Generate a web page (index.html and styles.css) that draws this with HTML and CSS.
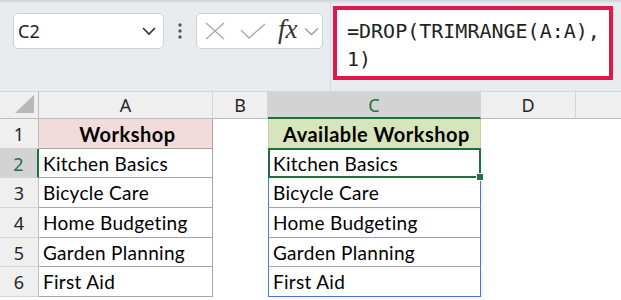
FILE: index.html
```html
<!DOCTYPE html>
<html lang="en">
<head>
    <meta charset="UTF-8">
    <meta name="viewport" content="width=device-width, initial-scale=1.0">
    <title>TRIMRANGE spill</title>
    <link rel="stylesheet" href="styles.css">
</head>
<body>
    <div class="top-strip"></div>

    <!-- Formula bar -->
    <div class="formula-bar">
        <div class="name-box">
            <span>C2</span>
            <svg width="16" height="10" viewBox="0 0 16 10"><path d="M2 2 L8 8 L14 2" fill="none" stroke="#333" stroke-width="1.6"/></svg>
        </div>
        <div class="dots">
            <svg width="6" height="20" viewBox="0 0 6 20"><circle cx="3" cy="3" r="1.7" fill="#555"/><circle cx="3" cy="9" r="1.7" fill="#555"/><circle cx="3" cy="15" r="1.7" fill="#555"/></svg>
        </div>
        <div class="fx-box">
            <svg class="icon-x" width="20" height="18" viewBox="0 0 20 18"><path d="M1 1 L19 17 M19 1 L1 17" fill="none" stroke="#a8a8a8" stroke-width="1.3"/></svg>
            <svg class="icon-check" width="26" height="16" viewBox="0 0 26 16"><path d="M1 7 L9 15 L25 1" fill="none" stroke="#a8a8a8" stroke-width="1.3"/></svg>
            <span class="fx">fx</span>
            <svg class="icon-down" width="15" height="9" viewBox="0 0 15 9"><path d="M1 1.5 L7.5 7.5 L14 1.5" fill="none" stroke="#999" stroke-width="1.3"/></svg>
        </div>
        <div class="formula-wrap">
            <div class="formula-input">=DROP(TRIMRANGE(A:A),<br>1)</div>
        </div>
    </div>

    <!-- Sheet -->
    <div class="sheet">
        <div class="hd corner"><span class="tri"></span></div>
        <div class="hd col">A</div>
        <div class="hd col">B</div>
        <div class="hd col col-sel">C</div>
        <div class="hd col">D</div>
        <div class="hd col col-last"></div>

        <div class="hd row">1</div>
        <div class="cell a title-a">Workshop</div>
        <div class="cell"></div>
        <div class="cell c title-c">Available Workshop</div>
        <div class="cell"></div>
        <div class="cell"></div>

        <div class="hd row row-sel">2</div>
        <div class="cell a">Kitchen Basics</div>
        <div class="cell"></div>
        <div class="cell c spill active">Kitchen Basics<span class="handle"></span></div>
        <div class="cell"></div>
        <div class="cell"></div>

        <div class="hd row">3</div>
        <div class="cell a">Bicycle Care</div>
        <div class="cell"></div>
        <div class="cell c spill">Bicycle Care</div>
        <div class="cell"></div>
        <div class="cell"></div>

        <div class="hd row">4</div>
        <div class="cell a">Home Budgeting</div>
        <div class="cell"></div>
        <div class="cell c spill">Home Budgeting</div>
        <div class="cell"></div>
        <div class="cell"></div>

        <div class="hd row">5</div>
        <div class="cell a">Garden Planning</div>
        <div class="cell"></div>
        <div class="cell c spill">Garden Planning</div>
        <div class="cell"></div>
        <div class="cell"></div>

        <div class="hd row">6</div>
        <div class="cell a">First Aid</div>
        <div class="cell"></div>
        <div class="cell c spill spill-end">First Aid</div>
        <div class="cell"></div>
        <div class="cell"></div>
    </div>
</body>
</html>
```

FILE: styles.css
```css
body {
    margin: 0;
    padding: 0;
    width: 621px;
    height: 300px;
    overflow: hidden;
    background: #fff;
    font-family: 'Noto Sans', sans-serif;
    color: #1d1d1d;
}

/* Ribbon edge */
.top-strip {
    height: 3px;
    background: linear-gradient(#cfd2d6, #e3e6e9);
}

/* Formula Bar */
.formula-bar {
    display: flex;
    align-items: flex-start;
    height: 88px;
    background: #e9ecef;
}

.name-box {
    display: flex;
    align-items: center;
    justify-content: space-between;
    box-sizing: border-box;
    width: 151px;
    height: 36px;
    margin: 10px 0 0 13px;
    padding: 0 6px 0 4px;
    background: #fff;
    border: 1px solid #cfd1d4;
    border-radius: 5px;
    font-size: 18px;
    color: #222;
}

.dots {
    width: 32px;
    display: flex;
    justify-content: center;
    padding-top: 19px;
}

.fx-box {
    display: flex;
    align-items: center;
    box-sizing: border-box;
    width: 127px;
    height: 36px;
    margin-top: 10px;
    padding-left: 8px;
    background: #fff;
    border: 1px solid #cfd1d4;
    border-radius: 5px;
}

.icon-check {
    margin-left: 15px;
}

.fx {
    margin-left: 12px;
    font-family: 'Liberation Serif', 'DejaVu Serif', serif;
    font-style: italic;
    font-size: 27px;
    color: #333;
    line-height: 1;
    padding-bottom: 4px;
}

.icon-down {
    margin-left: 6px;
}

.formula-wrap {
    flex: 1;
    align-self: stretch;
    margin-left: 7px;
    padding: 3px 0 0 2px;
    border-left: 1px solid #d6d8db;
}

.formula-input {
    box-sizing: border-box;
    width: 280px;
    height: 74px;
    padding: 7px 0 0 10px;
    background: #fff;
    border: 4px solid #e2184c;
    font-family: 'DejaVu Sans Mono', 'Liberation Mono', monospace;
    font-size: 20px;
    line-height: 28px;
    color: #222;
}

/* Sheet Grid */
.sheet {
    display: grid;
    grid-template-columns: 39px 174px 55px 213px 95px 1fr;
    grid-template-rows: 28px repeat(6, 29.67px);
}

.hd {
    box-sizing: border-box;
    background: #efefef;
    text-align: center;
    font-size: 18px;
    color: #262626;
}

.col {
    line-height: 27px;
    border-top: 1px solid #d4d4d4;
    border-right: 1px solid #d4d4d4;
    border-bottom: 1px solid #bdbdbd;
}

.col-sel {
    background: #d3d3d3;
    color: #1e7145;
    border-bottom: 2px solid #1e7145;
}

.col-last {
    border-right: none;
}

.corner {
    position: relative;
    border-top: 1px solid #d4d4d4;
    border-right: 1px solid #bdbdbd;
    border-bottom: 1px solid #bdbdbd;
}

.corner .tri {
    position: absolute;
    right: 4px;
    bottom: 5px;
    width: 0;
    height: 0;
    border-left: 19px solid transparent;
    border-bottom: 18px solid #b8b8b8;
}

.row {
    line-height: 30px;
    border-right: 1px solid #bdbdbd;
    border-bottom: 1px solid #d4d4d4;
}

.row-sel {
    background: #d3d3d3;
    color: #1e7145;
    border-right: 2px solid #1e7145;
}

/* Cells */
.cell {
    box-sizing: border-box;
    position: relative;
    padding-left: 4px;
    font-family: 'Lato', sans-serif;
    font-size: 19px;
    letter-spacing: 0.3px;
    line-height: 30px;
    color: #000;
    white-space: nowrap;
}

.cell.a {
    border-right: 1px solid #a6a6a6;
    border-bottom: 1px solid #a6a6a6;
}

.title-a {
    background: #f2dcdb;
    font-weight: bold;
    font-size: 20px;
    letter-spacing: 0.5px;
    text-align: center;
}

.title-c {
    background: #d8e4bc;
    font-weight: bold;
    font-size: 20px;
    letter-spacing: 0.5px;
    text-align: center;
    border-left: 1px solid #c4d3a2;
    border-right: 1px solid #c4d3a2;
}

.spill {
    padding-left: 4px;
    border-left: 1px solid #4a78c8;
    border-right: 1px solid #4a78c8;
    border-bottom: 1px solid #a6a6a6;
    box-shadow: 2px 0 3px rgba(0, 0, 0, 0.06);
}

.spill-end {
    border-bottom: 1px solid #4a78c8;
    box-shadow: 2px 2px 3px rgba(0, 0, 0, 0.06);
}

/* Active cell */
.active::after {
    content: '';
    position: absolute;
    left: -1px;
    top: -1px;
    right: -1px;
    bottom: -1px;
    border: 2px solid #1e7145;
}

.handle {
    position: absolute;
    right: -4px;
    bottom: -4px;
    width: 6px;
    height: 6px;
    background: #1e7145;
    border: 1px solid #fff;
    z-index: 2;
}
```
